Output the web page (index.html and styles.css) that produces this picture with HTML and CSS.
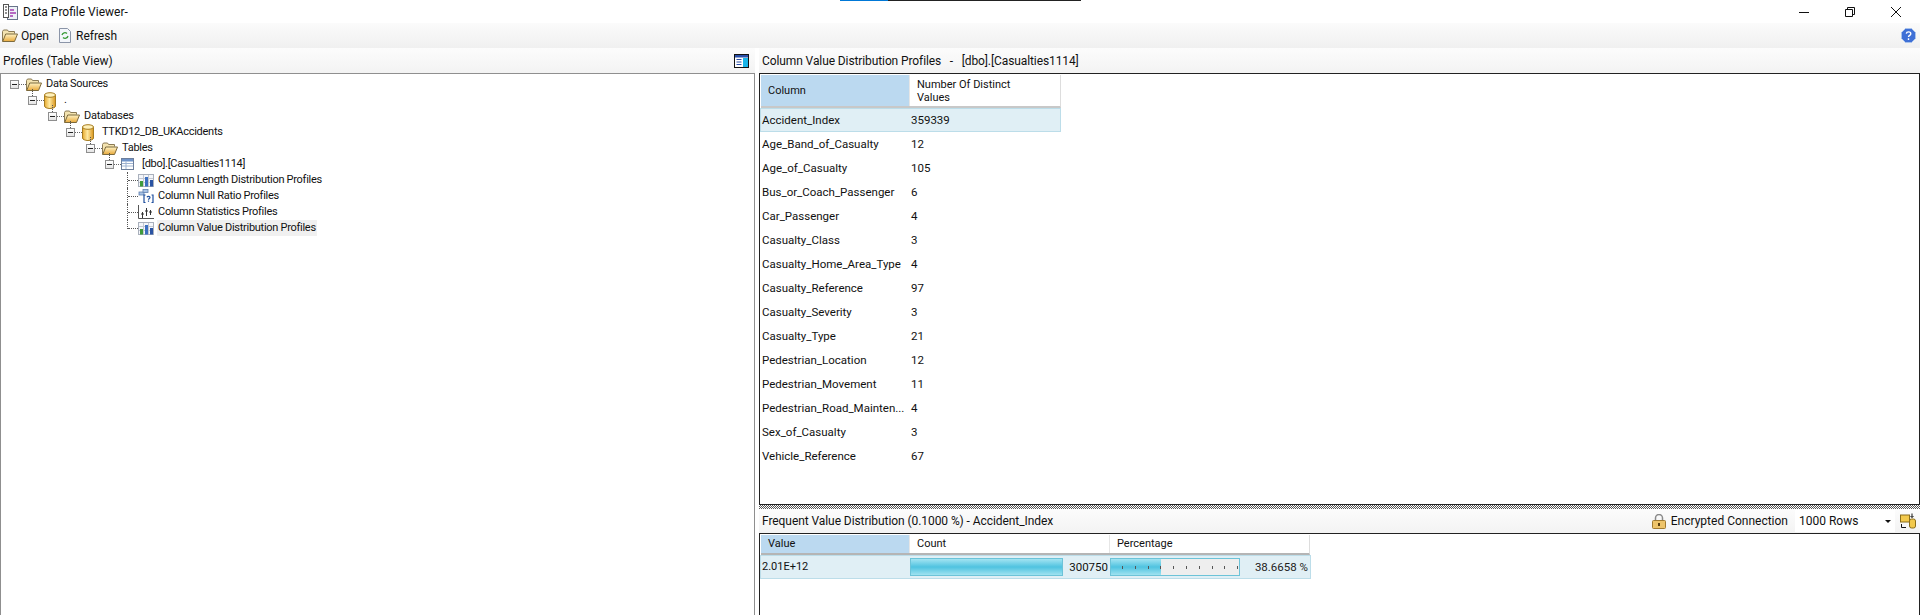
FILE: index.html
```html
<!DOCTYPE html>
<html lang="en">
<head>
<meta charset="utf-8">
<title>Data Profile Viewer</title>
<link rel="stylesheet" href="styles.css">
</head>
<body>
<svg class="defs" width="0" height="0" aria-hidden="true">
  <defs>
    <linearGradient id="gFolder" x1="0" y1="0" x2="0" y2="1"><stop offset="0" stop-color="#fff3c4"/><stop offset="1" stop-color="#e8a93a"/></linearGradient>
    <linearGradient id="gCyl" x1="0" y1="0" x2="1" y2="0"><stop offset="0" stop-color="#e6a92e"/><stop offset=".45" stop-color="#ffe9a0"/><stop offset="1" stop-color="#d9951d"/></linearGradient>
    <symbol id="folder" viewBox="0 0 16 13">
      <path d="M.5 12.5V2.5l1-1.5h4l1 1.5h6v2" fill="#f3e3b0" stroke="#8a7a55"/>
      <path d="M.7 12.5l3-7.5h11.8l-3 7.5z" fill="url(#gFolder)" stroke="#7d6a3c"/>
    </symbol>
    <symbol id="cyl" viewBox="0 0 12 17">
      <path d="M.5 3v11c0 1.4 2.5 2.5 5.500 2.500s5.500-1.100 5.500-2.500V3z" fill="url(#gCyl)" stroke="#a67c20"/>
      <ellipse cx="6" cy="3" rx="5.500" ry="2.300" fill="#fff0b8" stroke="#a67c20"/>
    </symbol>
    <symbol id="table" viewBox="0 0 13 12">
      <rect x=".5" y=".5" width="12" height="11" fill="#fff" stroke="#6d7f9c"/>
      <rect x="1" y="1" width="11" height="2.500" fill="#6f93c9"/>
      <path d="M1 5.500h11M1 8h11M5 3.500V11" stroke="#9fb4d2" fill="none"/>
    </symbol>
    <symbol id="bars" viewBox="0 0 16 13">
      <rect x=".5" y=".5" width="15" height="12" fill="#f4f6fa" stroke="#a9b0bc"/>
      <path d="M5.500 1v11M10.500 1v11M1 4.500h14M1 8.500h14" stroke="#c3c8d2"/>
      <rect x="2" y="7" width="3" height="5.500" fill="#3f9a3a"/>
      <rect x="7" y="3" width="3" height="9.500" fill="#3c6fc0"/>
      <rect x="12" y="6" width="3" height="6.500" fill="#2a53a3"/>
    </symbol>
    <symbol id="nullr" viewBox="0 0 16 14">
      <rect x="1" y="3" width="5" height="3" fill="#a9c3e6" stroke="#5f7faf" stroke-width=".8"/>
      <rect x="5" y="0.500" width="5" height="3" fill="#a9c3e6" stroke="#5f7faf" stroke-width=".8"/>
      <path d="M7.500 13.500H6V6h1.500M13.500 13.500H15V6h-1.500" fill="none" stroke="#1f4f9e" stroke-width="1.200"/>
      <path d="M9 8.200c.5-1.200 3-1.200 3 .3 0 1-1.500 1-1.500 2.200M10.500 11.500v1.200" fill="none" stroke="#1f4f9e" stroke-width="1.200"/>
    </symbol>
    <symbol id="stats" viewBox="0 0 16 14">
      <path d="M.5 0v13.500H16" fill="none" stroke="#555"/>
      <path d="M4.500 7v6M8.500 3v8M12.500 5v5M3 9h3M7 6h3M11 7h3" fill="none" stroke="#333"/>
    </symbol>
  </defs>
</svg>

<header class="titlebar">
  <svg class="app-icon" width="15" height="16" viewBox="0 0 15 16">
    <rect x="4.500" y="2.500" width="10" height="13" fill="#eef1f7" stroke="#68748a"/>
    <rect x=".5" y=".5" width="5" height="13" fill="#fff" stroke="#555"/>
    <path d="M2 3h2M2 6h2M2 9h2" stroke="#222"/>
    <path d="M7 6h4M7 9h6M7 12h3" stroke="#a23bb0" stroke-width="1.500"/>
  </svg>
  <span class="title-text">Data Profile Viewer-</span>
  <div class="accent"><span class="accent-blue"></span><span class="accent-dark"></span></div>
  <div class="winbtns">
    <svg width="10" height="10" viewBox="0 0 10 10"><path d="M0 5.500h10" stroke="#111"/></svg>
    <svg width="10" height="10" viewBox="0 0 10 10"><path d="M.5 2.500h7v7h-7zM2.500 2.500v-2h7v7h-2" fill="none" stroke="#111"/></svg>
    <svg width="10" height="10" viewBox="0 0 10 10"><path d="M0 0l10 10M10 0L0 10" stroke="#111"/></svg>
  </div>
</header>

<div class="toolbar">
  <button class="tool"><svg width="16" height="13"><use href="#folder"/></svg>Open</button>
  <button class="tool tool-refresh">
    <svg width="12" height="15" viewBox="0 0 12 15">
      <path d="M.5.500h8l3 3v11H.5z" fill="#f3f6fb" stroke="#8b95a8"/>
      <path d="M3 7a3 3 0 0 1 5-1.500M9 8a3 3 0 0 1-5 1.500" fill="none" stroke="#3b9c3a" stroke-width="1.300"/>
    </svg>Refresh</button>
  <svg class="help" width="15" height="15" viewBox="0 0 15 15">
    <path d="M4.500.5h6l4 4v6l-4 4h-6l-4-4v-6z" fill="#3f70d6" stroke="#a9c3ec"/>
    <path d="M5.300 5.700c.3-2.400 4.500-2.400 4.500 0 0 1.700-2.300 1.600-2.300 3.400M7.500 10.300v1.600" fill="none" stroke="#fff" stroke-width="1.400"/>
  </svg>
</div>

<main class="main">
  <section class="left">
    <div class="panehead">
      <span>Profiles (Table View)</span>
      <svg class="switch" width="15" height="14" viewBox="0 0 15 14">
        <rect x=".5" y=".5" width="14" height="13" fill="#fff" stroke="#111"/>
        <rect x="1" y="1" width="13" height="2.500" fill="#2a4fa8"/>
        <rect x="9" y="4" width="5" height="9" fill="#19b5e8"/>
        <path d="M2.500 5.500h5M2.500 8h5M2.500 10.500h5" stroke="#2a4fa8"/>
      </svg>
    </div>
    <div class="tree">
      <div class="node l1"><i class="exp first"></i><i class="stub"></i><svg class="ico" width="16" height="13"><use href="#folder"/></svg><span class="lbl">Data Sources</span></div>
      <div class="node l2"><i class="exp"></i><i class="stub"></i><svg class="ico" width="12" height="17"><use href="#cyl"/></svg><span class="lbl lbl-wide">.</span></div>
      <div class="node l3"><i class="exp"></i><i class="stub"></i><svg class="ico" width="16" height="13"><use href="#folder"/></svg><span class="lbl">Databases</span></div>
      <div class="node l4"><i class="exp"></i><i class="stub"></i><svg class="ico" width="12" height="17"><use href="#cyl"/></svg><span class="lbl lbl-wide">TTKD12_DB_UKAccidents</span></div>
      <div class="node l5"><i class="exp"></i><i class="stub"></i><svg class="ico" width="16" height="13"><use href="#folder"/></svg><span class="lbl">Tables</span></div>
      <div class="node l6"><i class="exp"></i><i class="stub"></i><svg class="ico" width="13" height="12"><use href="#table"/></svg><span class="lbl lbl-wide">[dbo].[Casualties1114]</span></div>
      <div class="node leaf"><i class="branch"></i><svg class="ico" width="16" height="13"><use href="#bars"/></svg><span class="lbl">Column Length Distribution Profiles</span></div>
      <div class="node leaf"><i class="branch"></i><svg class="ico" width="16" height="14"><use href="#nullr"/></svg><span class="lbl">Column Null Ratio Profiles</span></div>
      <div class="node leaf"><i class="branch"></i><svg class="ico" width="16" height="14"><use href="#stats"/></svg><span class="lbl">Column Statistics Profiles</span></div>
      <div class="node leaf last"><i class="branch"></i><svg class="ico" width="16" height="13"><use href="#bars"/></svg><span class="lbl sel">Column Value Distribution Profiles</span></div>
    </div>
  </section>

  <section class="right">
    <div class="panehead"><span>Column Value Distribution Profiles&nbsp;&nbsp; -&nbsp;&nbsp; [dbo].[Casualties1114]</span></div>
    <div class="gridbox upper">
      <div class="thead thead-upper">
        <div class="th active">Column</div>
        <div class="th wrap">Number Of Distinct Values</div>
      </div>
      <div class="tr selrow"><span class="c1">Accident_Index</span><span class="c2">359339</span></div>
      <div class="tr"><span class="c1">Age_Band_of_Casualty</span><span class="c2">12</span></div>
      <div class="tr"><span class="c1">Age_of_Casualty</span><span class="c2">105</span></div>
      <div class="tr"><span class="c1">Bus_or_Coach_Passenger</span><span class="c2">6</span></div>
      <div class="tr"><span class="c1">Car_Passenger</span><span class="c2">4</span></div>
      <div class="tr"><span class="c1">Casualty_Class</span><span class="c2">3</span></div>
      <div class="tr"><span class="c1">Casualty_Home_Area_Type</span><span class="c2">4</span></div>
      <div class="tr"><span class="c1">Casualty_Reference</span><span class="c2">97</span></div>
      <div class="tr"><span class="c1">Casualty_Severity</span><span class="c2">3</span></div>
      <div class="tr"><span class="c1">Casualty_Type</span><span class="c2">21</span></div>
      <div class="tr"><span class="c1">Pedestrian_Location</span><span class="c2">12</span></div>
      <div class="tr"><span class="c1">Pedestrian_Movement</span><span class="c2">11</span></div>
      <div class="tr"><span class="c1">Pedestrian_Road_Mainten...</span><span class="c2">4</span></div>
      <div class="tr"><span class="c1">Sex_of_Casualty</span><span class="c2">3</span></div>
      <div class="tr"><span class="c1">Vehicle_Reference</span><span class="c2">67</span></div>
    </div>
    <div class="splitter"></div>
    <div class="panehead lowerhead">
      <span class="grow">Frequent Value Distribution (0.1000 %) - Accident_Index</span>
      <svg width="14" height="15" viewBox="0 0 14 15">
        <path d="M3.500 7V4a3.500 3.500 0 0 1 7 0v3" fill="none" stroke="#8a8a8a" stroke-width="1.500"/>
        <rect x=".5" y="6.500" width="13" height="8" rx="1" fill="#eec46a" stroke="#a07a30"/>
        <path d="M7 9v3" stroke="#5a4010" stroke-width="2"/>
      </svg>
      <span class="enc">Encrypted Connection</span>
      <div class="combo"><span>1000 Rows</span><i class="arrow"></i></div>
      <svg class="dbswap" width="16" height="16" viewBox="0 0 16 16">
        <rect x=".5" y="2" width="9" height="7" fill="#f2c94c" stroke="#8a6d1a"/>
        <rect x="9.500" y="6" width="6" height="9" rx="2" fill="#f2c94c" stroke="#8a6d1a"/>
        <path d="M12 .5v4M10.500 3l1.500 1.500L13.500 3M1.500 11v3.500H6" fill="none" stroke="#111"/>
      </svg>
    </div>
    <div class="gridbox lower">
      <div class="thead thead-lower">
        <div class="th active">Value</div>
        <div class="th">Count</div>
        <div class="th">Percentage</div>
      </div>
      <div class="fr">
        <span class="fv">2.01E+12</span>
        <div class="fc"><div class="bar full"></div><span>300750</span></div>
        <div class="fc"><div class="bar pct"><div class="fill"></div><div class="ticks"></div></div><span class="pctnum">38.6658 %</span></div>
      </div>
    </div>
  </section>
</main>
</body>
</html>
```
FILE: styles.css
```css
* { box-sizing: border-box; }
html, body { margin: 0; height: 615px; overflow: hidden; }
body {
  display: flex;
  flex-direction: column;
  background: #fff;
  color: #111;
  font: 12px/16px Roboto, "Noto Sans", sans-serif;
}
.defs { position: absolute; }

.titlebar { height: 23px; display: flex; align-items: center; padding-left: 3px; position: relative; }
.title-text { margin-left: 5px; font-size: 12px; }
.accent { position: absolute; left: 840px; top: 0; display: flex; height: 1px; }
.accent-blue { width: 48px; background: #0078d7; }
.accent-dark { width: 193px; background: #222; }
.winbtns { margin-left: auto; display: flex; gap: 36px; padding-right: 19px; }

.toolbar {
  height: 25px;
  display: flex;
  align-items: center;
  padding-left: 2px;
  background: linear-gradient(#fbfbfb, #f0f0f0);
}
.tool {
  display: flex; align-items: center; gap: 3px;
  background: none; border: 0; padding: 0;
  font: inherit; font-size: 12px; color: inherit;
}
.tool-refresh { margin-left: 10px; gap: 5px; }
.help { margin-left: auto; margin-right: 4px; }

.main { flex: 1; display: flex; min-height: 0; }
.left { width: 755px; display: flex; flex-direction: column; }
.right { flex: 1; margin-left: 4px; display: flex; flex-direction: column; min-width: 0; }

.panehead {
  height: 25px; flex: none;
  display: flex; align-items: center;
  padding: 0 3px;
  background: linear-gradient(#fcfcfc, #f3f3f3);
  font-size: 12px;
}
.left .panehead { justify-content: space-between; padding-right: 6px; }
.right > .panehead { padding-left: 3px; letter-spacing: -.1px; }

.tree {
  flex: 1;
  border: 1px solid #8f8f8f;
  border-bottom: 0;
  padding: 2px 1px 0;
}
.node { height: 16px; display: flex; align-items: center; position: relative; font-size: 11px; letter-spacing: -.28px; }
.l1 { padding-left: 8px; }
.l2 { padding-left: 26px; }
.l3 { padding-left: 46px; }
.l4 { padding-left: 64px; }
.l5 { padding-left: 84px; }
.l6 { padding-left: 103px; }
.leaf { padding-left: 125px; }
.exp {
  width: 9px; height: 9px; flex: none;
  border: 1px solid #8e8e8e;
  background: linear-gradient(#fff, #e4e4e4);
  position: relative;
}
.exp::after { content: ""; position: absolute; left: 1px; right: 1px; top: 3px; height: 1px; background: #222; }
.exp:not(.first)::before {
  content: ""; position: absolute; left: 3px; top: -8px; height: 7px;
  border-left: 1px dotted #555;
}
.stub { width: 7px; flex: none; border-top: 1px dotted #666; }
.ico { flex: none; }
.lbl { margin-left: 3px; padding: 0 1px; white-space: nowrap; }
.lbl-wide { margin-left: 7px; }
.sel { background: #f0f0f0; }
.branch { width: 11px; height: 16px; flex: none; position: relative; border-left: 1px dotted #555; }
.branch::after { content: ""; position: absolute; left: 0; right: 0; top: 8px; border-top: 1px dotted #555; }
.last .branch { height: 9px; align-self: flex-start; }
.leaf .lbl { margin-left: 3px; }

.gridbox { border: 1px solid #222; border-bottom-width: 0; padding: 1px 1px 0; }
.upper { height: 432px; flex: none; border-bottom-width: 1px; }
.lower { flex: 1; }

.splitter {
  height: 4px; flex: none;
  background: conic-gradient(#555 25%, #fff 0 50%, #555 0 75%, #fff 0) 0 0 / 2px 2px;
}
.right > .lowerhead { height: 24px; padding-right: 4px; letter-spacing: 0; }
.grow { flex: 1; letter-spacing: -.07px; }
.enc { margin-left: 5px; }
.combo {
  width: 100px; height: 22px; margin-left: 7px;
  background: #fff;
  display: flex; align-items: center; justify-content: space-between;
  padding: 0 4px 0 4px;
}
.arrow { width: 0; height: 0; border: 3px solid transparent; border-top: 3px solid #111; border-bottom: 0; }
.dbswap { margin-left: 5px; }

.thead { display: grid; background: #fff; }
.thead-upper { grid-template-columns: 148px 150px; width: 300px; height: 33px; border-bottom: 2px solid #c8c8c8; border-right: 1px solid #ddd; }
.thead-lower { grid-template-columns: 148px 200px 200px; width: 549px; height: 20px; border-bottom: 2px solid #b5b5b5; border-right: 1px solid #ddd; }
.th { display: flex; align-items: center; padding-left: 7px; font-size: 11px; border-left: 1px solid #e6e6e6; }
.th.active { background: #bbd9f0; border-left: 0; }
.wrap { line-height: 13px; padding-right: 30px; }

.tr { height: 24px; width: 301px; margin-left: -1px; display: flex; align-items: center; font-size: 11.5px; }
.c1 { width: 151px; white-space: nowrap; padding-left: 2px; overflow: hidden; }
.selrow { background: #e0eff5; border: 1px solid #bcdde9; }
.selrow .c1 { padding-left: 1px; width: 150px; }

.fr {
  width: 551px; height: 24px; margin-left: -1px;
  display: flex; align-items: center;
  background: #e0eff5; border: 1px solid #bcdde9;
  font-size: 11.5px;
}
.fv { width: 149px; padding-left: 1px; font-size: 11px; }
.fc { width: 200px; display: flex; align-items: center; justify-content: space-between; padding-right: 2px; }
.bar { height: 18px; border: 1px solid #6cc3d8; background: #eee; position: relative; overflow: hidden; }
.full { width: 153px; background: linear-gradient(#a3e4f2, #4fc3e0 50%, #9fe2f0); }
.pct { width: 130px; }
.fill { width: 50px; height: 100%; background: linear-gradient(#a3e4f2, #4fc3e0 50%, #9fe2f0); }
.ticks {
  position: absolute; left: 11px; right: 0; top: 7px; height: 3px;
  background: repeating-linear-gradient(90deg, #555 0 1px, transparent 1px 12.800px);
}
.pctnum { color: #222; }
```
